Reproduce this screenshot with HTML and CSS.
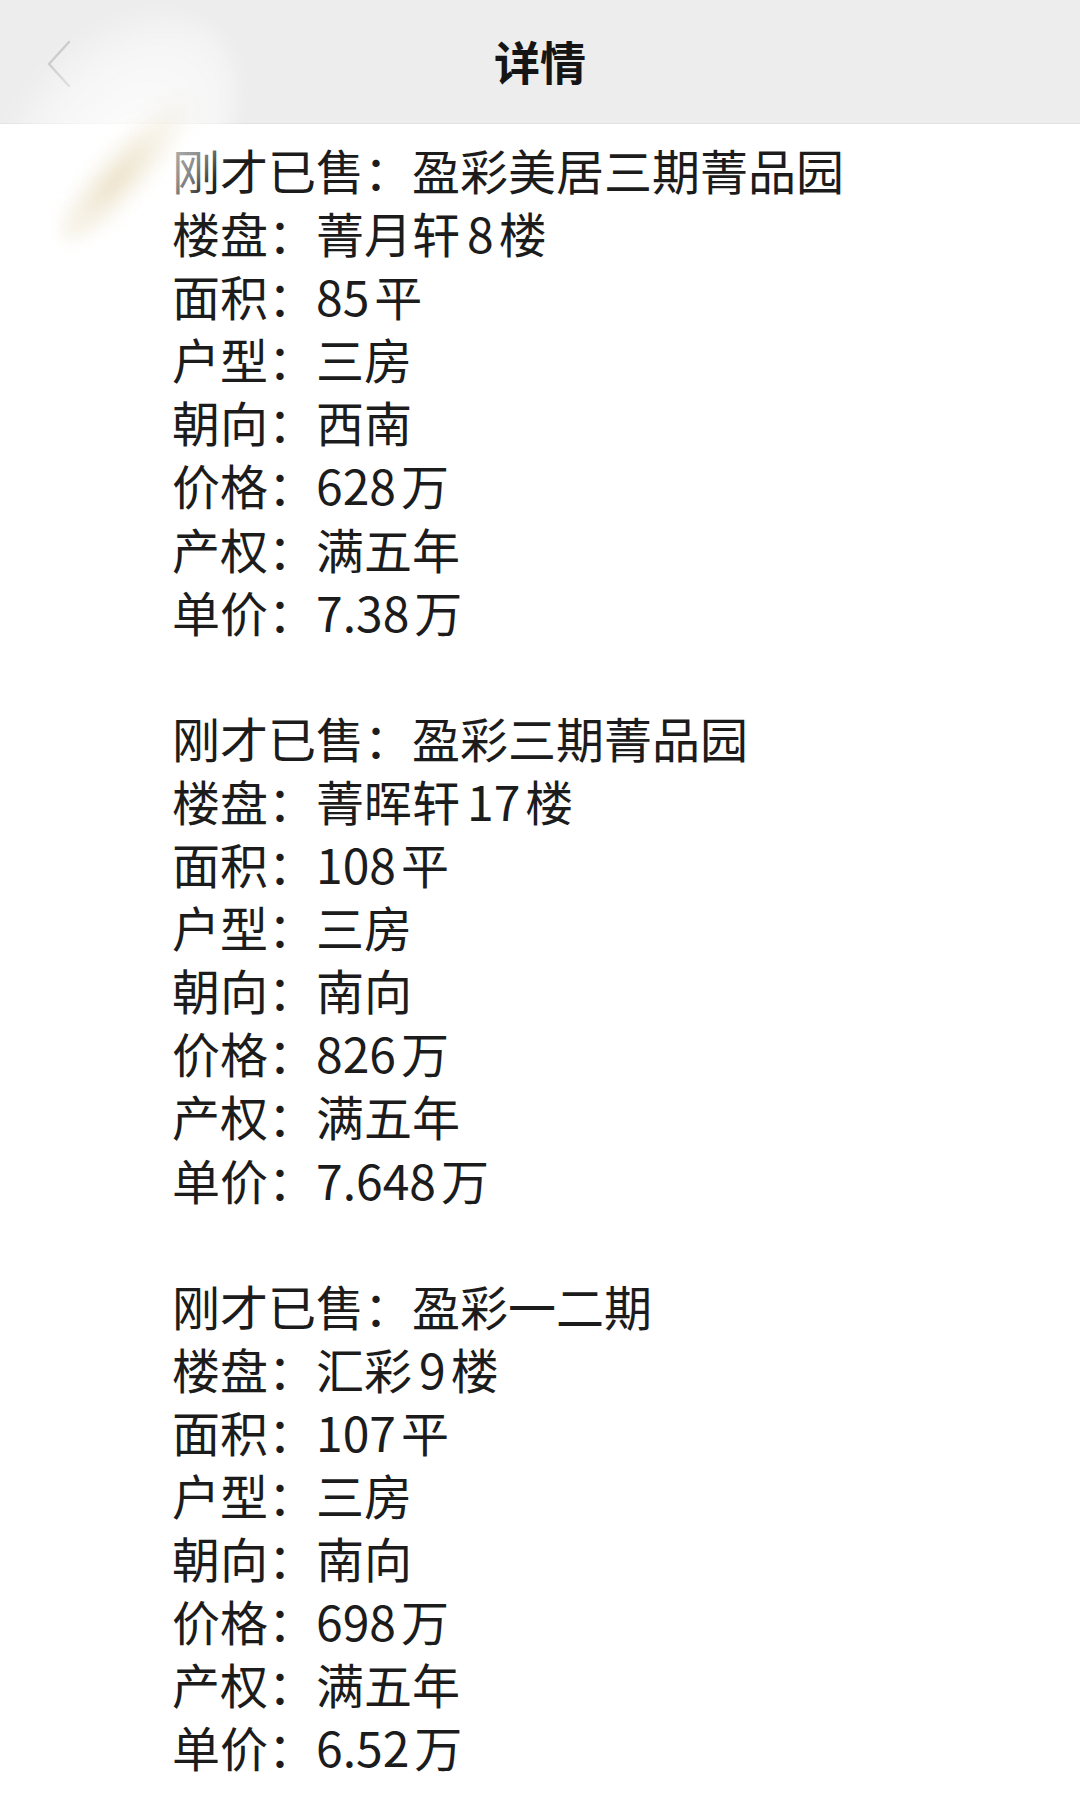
FILE: index.html
```html
<!DOCTYPE html>
<html lang="zh-CN">
<head>
<meta charset="utf-8">
<title>详情</title>
<link rel="stylesheet" href="styles.css">
</head>
<body>
<div class="page">
  <header class="nav">
    <svg class="back" viewBox="0 0 28 50" width="28" height="50" aria-hidden="true">
      <path d="M24 3 L4 25 L24 47" fill="none" stroke="#c9c9c9" stroke-width="2.4" stroke-linecap="round" stroke-linejoin="round"/>
    </svg>
    <h1 class="title">详情</h1>
  </header>
  <main class="content">
    <p class="line">刚才已售：盈彩美居三期菁品园</p>
    <p class="line">楼盘：菁月轩<span class="num mid">8</span>楼</p>
    <p class="line">面积：<span class="num">85</span>平</p>
    <p class="line">户型：三房</p>
    <p class="line">朝向：西南</p>
    <p class="line">价格：<span class="num">628</span>万</p>
    <p class="line">产权：满五年</p>
    <p class="line">单价：<span class="num">7.38</span>万</p>
    <p class="line blank"></p>
    <p class="line">刚才已售：盈彩三期菁品园</p>
    <p class="line">楼盘：菁晖轩<span class="num mid">17</span>楼</p>
    <p class="line">面积：<span class="num">108</span>平</p>
    <p class="line">户型：三房</p>
    <p class="line">朝向：南向</p>
    <p class="line">价格：<span class="num">826</span>万</p>
    <p class="line">产权：满五年</p>
    <p class="line">单价：<span class="num">7.648</span>万</p>
    <p class="line blank"></p>
    <p class="line">刚才已售：盈彩一二期</p>
    <p class="line">楼盘：汇彩<span class="num mid">9</span>楼</p>
    <p class="line">面积：<span class="num">107</span>平</p>
    <p class="line">户型：三房</p>
    <p class="line">朝向：南向</p>
    <p class="line">价格：<span class="num">698</span>万</p>
    <p class="line">产权：满五年</p>
    <p class="line">单价：<span class="num">6.52</span>万</p>
  </main>
  <div class="haze" aria-hidden="true"></div>
  <div class="smudge" aria-hidden="true"></div>
</div>
</body>
</html>
```

FILE: styles.css
```css
html, body {
  margin: 0;
  padding: 0;
  background: #ffffff;
}

body {
  font-family: "Noto Sans CJK SC", "Noto Sans", sans-serif;
  color: #1c1c1c;
}

.page {
  position: relative;
  width: 1080px;
  min-height: 1814px;
  overflow: hidden;
}

.nav {
  position: relative;
  height: 123px;
  background: #ededed;
  border-bottom: 1px solid #e2e2e2;
  display: flex;
  align-items: center;
  justify-content: center;
}

.back {
  position: absolute;
  left: 45px;
  top: 39px;
}

.title {
  margin: 0;
  font-size: 46px;
  font-weight: 700;
  color: #151515;
  line-height: 1;
  margin-top: -4px;
}

.content {
  padding: 14px 0 0 172px;
}

.line {
  margin: 0;
  font-size: 48px;
  line-height: 63.1px;
  height: 63.1px;
  white-space: nowrap;
  color: #1c1c1c;
}

.num {
  margin-right: 5px;
}

.num.mid {
  margin-left: 7px;
}

.haze {
  position: absolute;
  left: -40px;
  top: 40px;
  width: 300px;
  height: 200px;
  border-radius: 50%;
  background: radial-gradient(ellipse at 55% 55%, rgba(255, 255, 255, 0.85) 0%, rgba(255, 255, 255, 0.5) 45%, rgba(255, 255, 255, 0) 72%);
  transform: rotate(-45deg);
  filter: blur(8px);
  pointer-events: none;
}

.smudge {
  position: absolute;
  left: 30px;
  top: 135px;
  width: 200px;
  height: 60px;
  border-radius: 50%;
  background: radial-gradient(ellipse at 40% 50%, rgba(228, 214, 180, 0.75) 0%, rgba(240, 232, 212, 0.55) 35%, rgba(255, 255, 255, 0) 70%);
  transform: rotate(-48deg);
  filter: blur(7px);
  pointer-events: none;
}
```
